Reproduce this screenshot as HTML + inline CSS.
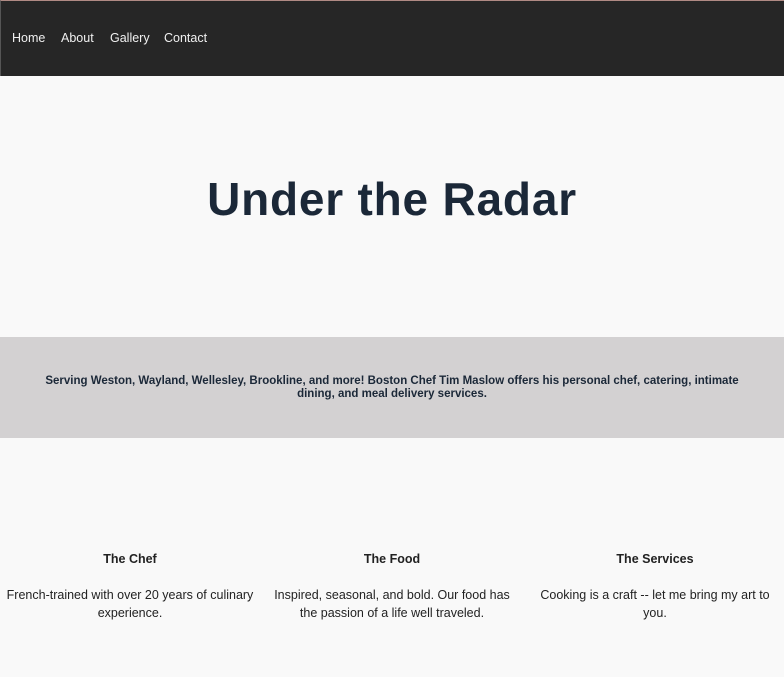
<!DOCTYPE html>
<html><head><meta charset="utf-8"><style>
body{margin:0;width:784px;height:677px;background:#f9f9f9;font-family:"Liberation Sans",sans-serif;overflow:hidden}
.nav{height:76px;background:#262626;border-top:1px solid #b08a84;border-left:1px solid #555;box-sizing:border-box;position:relative}
.nav a{position:absolute;top:30px;color:#f0f0f0;font-size:12.5px;text-decoration:none}
h1{margin:0;position:absolute;top:172px;left:0;width:784px;text-align:center;font-family:"Liberation Sans",sans-serif;font-weight:bold;font-size:46px;color:#1b2838;letter-spacing:.8px}
.band{position:absolute;top:337px;left:0;width:784px;height:101px;background:#d3d1d2}
.band p{margin:0;position:absolute;top:38px;left:10px;right:10px;text-align:center;font-family:"Liberation Sans",sans-serif;font-weight:bold;font-size:11.5px;line-height:13px;color:#1b2838;letter-spacing:0}
.col{position:absolute;top:551px;width:250px;text-align:center;color:#222;font-size:12.5px}
.col h3{margin:0 0 18px;font-size:12.5px;font-weight:bold;line-height:17px}
.col p{margin:0;line-height:18px}
</style></head><body>
<div class="nav"><a style="left:11px">Home</a><a style="left:60px">About</a><a style="left:109px">Gallery</a><a style="left:163px">Contact</a></div>
<h1>Under the Radar</h1>
<div class="band"><p>Serving Weston, Wayland, Wellesley, Brookline, and more! Boston Chef Tim Maslow offers his personal chef, catering, intimate<br>dining, and meal delivery services.</p></div>
<div class="col" style="left:5px"><h3>The Chef</h3><p>French-trained with over 20 years of culinary experience.</p></div>
<div class="col" style="left:267px"><h3>The Food</h3><p>Inspired, seasonal, and bold. Our food has the passion of a life well traveled.</p></div>
<div class="col" style="left:530px"><h3>The Services</h3><p>Cooking is a craft -- let me bring my art to you.</p></div>
</body></html>
